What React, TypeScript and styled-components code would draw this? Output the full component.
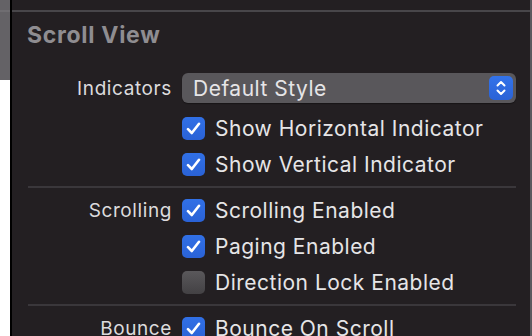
import styled, { createGlobalStyle } from 'styled-components';

const GlobalStyle = createGlobalStyle`
  html, body {
    margin: 0;
    padding: 0;
    background: #ffffff;
  }
  body {
    font-family: Inter, "Noto Sans", "Liberation Sans", sans-serif;
    -webkit-font-smoothing: antialiased;
  }
`;

const Frame = styled.div`
  display: flex;
  width: 532px;
  height: 336px;
  overflow: hidden;
`;

const Gutter = styled.div`
  width: 10px;
  display: flex;
  flex-direction: column;
  background: #ffffff;
`;

const GutterTop = styled.div`
  height: 68px;
  background: #646266;
  border-top: 2px solid #6f6d71;
  margin-top: 10px;
  box-shadow: 0 -10px 0 #646266;
`;

const Edge = styled.div<{ color: string }>`
  width: 2px;
  background: ${(p) => p.color};
`;

const Panel = styled.div`
  flex: 1;
  background: #231f22;
  padding-top: 10px;
  display: flex;
  flex-direction: column;
`;

const Section = styled.div`
  border-top: 2px solid #48464a;
  display: flex;
  flex-direction: column;
`;

const Title = styled.h2`
  margin: 0;
  height: 58px;
  padding-left: 15px;
  font-size: 23px;
  font-weight: 700;
  letter-spacing: 0.7px;
  line-height: 47px;
  color: #8f8d91;
`;

const Row = styled.div`
  display: grid;
  grid-template-columns: 160px 1fr;
  column-gap: 10px;
  align-items: center;
  height: 36px;
  padding-right: 14px;
`;

const Gap = styled.div`
  height: 4px;
`;

const Label = styled.span`
  text-align: right;
  font-size: 19px;
  letter-spacing: 0.6px;
  color: #dcdbdd;
`;

const Separator = styled.div`
  height: 2px;
  margin: 4px 14px 4px 16px;
  background: #3a373b;
`;

const Popup = styled.div`
  height: 30px;
  border-radius: 6px;
  background: #59575b;
  box-shadow: 0 1px 1px rgba(0, 0, 0, 0.35);
  display: flex;
  align-items: center;
  justify-content: space-between;
  padding: 0 3px 0 11px;
`;

const PopupText = styled.span`
  font-size: 21px;
  letter-spacing: 0.5px;
  color: #e6e5e7;
`;

const Stepper = styled.div`
  width: 24px;
  height: 24px;
  border-radius: 5px;
  background: linear-gradient(#3373ea, #2a62d6);
  display: flex;
  align-items: center;
  justify-content: center;
`;

const Check = styled.label`
  display: flex;
  align-items: center;
  gap: 10px;
  font-size: 21px;
  letter-spacing: 0.5px;
  color: #e6e5e7;
  white-space: nowrap;
`;

const Box = styled.span<{ checked: boolean }>`
  flex: none;
  width: 23px;
  height: 23px;
  border-radius: 5px;
  display: flex;
  align-items: center;
  justify-content: center;
  background: ${(p) =>
    p.checked
      ? 'linear-gradient(#3170e6, #2a62d6)'
      : 'linear-gradient(#5a585b, #434144)'};
`;

const CheckMark = () => (
  <svg width="15" height="13" viewBox="0 0 15 13">
    <path
      d="M2 7.2 L5.8 11 L13 1.8"
      fill="none"
      stroke="#ffffff"
      strokeWidth="2.6"
      strokeLinecap="round"
      strokeLinejoin="round"
    />
  </svg>
);

const Chevrons = () => (
  <svg width="12" height="18" viewBox="0 0 12 18">
    <path
      d="M2.5 6.5 L6 3 L9.5 6.5 M2.5 11.5 L6 15 L9.5 11.5"
      fill="none"
      stroke="#ffffff"
      strokeWidth="2"
      strokeLinecap="round"
      strokeLinejoin="round"
    />
  </svg>
);

const Checkbox = ({ checked, children }: { checked: boolean; children: string }) => (
  <Check>
    <Box checked={checked}>{checked && <CheckMark />}</Box>
    {children}
  </Check>
);

const App = () => {
  return (
    <>
      <GlobalStyle />
      <Frame>
        <Gutter>
          <GutterTop />
        </Gutter>
        <Edge color="#000000" />
        <Panel>
          <Section>
            <Title>Scroll View</Title>
            <Row>
              <Label>Indicators</Label>
              <Popup>
                <PopupText>Default Style</PopupText>
                <Stepper>
                  <Chevrons />
                </Stepper>
              </Popup>
            </Row>
            <Gap />
            <Row>
              <span />
              <Checkbox checked>Show Horizontal Indicator</Checkbox>
            </Row>
            <Row>
              <span />
              <Checkbox checked>Show Vertical Indicator</Checkbox>
            </Row>
            <Separator />
            <Row>
              <Label>Scrolling</Label>
              <Checkbox checked>Scrolling Enabled</Checkbox>
            </Row>
            <Row>
              <span />
              <Checkbox checked>Paging Enabled</Checkbox>
            </Row>
            <Row>
              <span />
              <Checkbox checked={false}>Direction Lock Enabled</Checkbox>
            </Row>
            <Separator />
            <Row>
              <Label>Bounce</Label>
              <Checkbox checked>Bounce On Scroll</Checkbox>
            </Row>
          </Section>
        </Panel>
        <Edge color="#5c5a5e" />
      </Frame>
    </>
  );
};

export default App;
